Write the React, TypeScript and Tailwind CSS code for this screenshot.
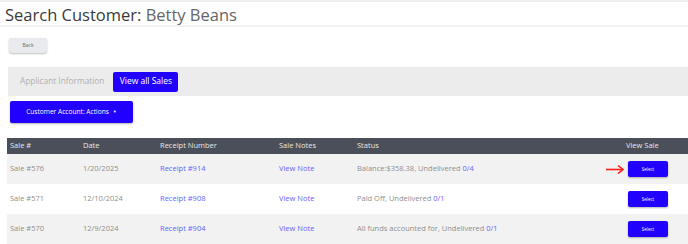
export default function App() {
  const rows = [
    { sale: "Sale #576", date: "1/20/2025", receipt: "Receipt #914", status: "Balance:$358.38, Undelivered ", count: "0/4", arrow: true, bg: "bg-[#f2f2f2]" },
    { sale: "Sale #571", date: "12/10/2024", receipt: "Receipt #908", status: "Paid Off, Undelivered ", count: "0/1", arrow: false, bg: "bg-white" },
    { sale: "Sale #570", date: "12/9/2024", receipt: "Receipt #904", status: "All funds accounted for, Undelivered ", count: "0/1", arrow: false, bg: "bg-[#f2f2f2]" },
  ];

  return (
    <div className="h-[244px] w-[688px] overflow-hidden bg-white font-['Open_Sans',sans-serif]">
      <div className="h-[2px] bg-[#eeeeee]" />
      <div className="border-b-2 border-[#f3f3f3] pl-[5px] pt-[3px] pb-[1px]">
        <h1 className="text-[16.5px] leading-[19px] text-[#3a3a3a]">
          Search Customer: <span className="text-[#666666]">Betty Beans</span>
        </h1>
      </div>

      <div className="flex pl-[9px] pt-[11px]">
        <button className="h-[15px] w-[38px] rounded-[3px] bg-[#e8eaee] text-[5px] text-[#666] shadow-[0_1px_2px_rgba(0,0,0,0.25)]">
          Back
        </button>
      </div>

      <div className="ml-[8px] mt-[14px] flex h-[29px] items-center bg-[#ececec] pl-[12px]">
        <span className="text-[8.3px] text-[#b0b0b0]">Applicant Information</span>
        <button className="ml-[9px] h-[20px] w-[65px] rounded-[2px] bg-[#2200ff] text-[8.5px] text-white">
          View all Sales
        </button>
      </div>

      <div className="flex pl-[10px] pt-[5px]">
        <button className="flex h-[22px] w-[123px] items-center justify-center gap-[4px] rounded-[2px] bg-[#2200ff] text-[6.6px] text-white shadow-[0_1px_2px_rgba(0,0,0,0.3)]">
          Customer Account: Actions
          <span className="text-[4px]">▼</span>
        </button>
      </div>

      <table className="ml-[7px] mt-[15px] w-[681px] border-collapse text-[7.5px]">
        <thead>
          <tr className="h-[16px] bg-[#4a4f59] text-left text-[#e8e8e8]">
            <th className="w-[76px] pl-[3px] font-normal">Sale #</th>
            <th className="w-[77px] pl-0 font-normal">Date</th>
            <th className="w-[119px] font-normal">Receipt Number</th>
            <th className="w-[78px] font-normal">Sale Notes</th>
            <th className="w-[269px] font-normal">Status</th>
            <th className="pl-0 font-normal">View Sale</th>
          </tr>
        </thead>
        <tbody>
          {rows.map((r) => (
            <tr key={r.sale} className={`h-[30px] ${r.bg} text-[#8f8f8f]`}>
              <td className="pl-[3px]">{r.sale}</td>
              <td>{r.date}</td>
              <td className="text-[#6a62ff]">{r.receipt}</td>
              <td className="text-[#6a62ff]">View Note</td>
              <td>
                {r.status}
                <span className="text-[#6a62ff]">{r.count}</span>
              </td>
              <td>
                <div className="relative ml-[2px] flex w-[40px]">
                  {r.arrow && (
                    <svg className="absolute left-[-23px] top-[3px]" width="20" height="10" viewBox="0 0 20 10">
                      <path d="M1 5.5 H17" stroke="#ff1a1a" strokeWidth="1.6" />
                      <path d="M13 1.5 L18 5.5 L13 9.5" fill="none" stroke="#ff1a1a" strokeWidth="1.6" />
                    </svg>
                  )}
                  <button className="h-[16px] w-[40px] rounded-[2px] bg-[#2200ff] text-[4.5px] text-white shadow-[0_1px_2px_rgba(0,0,0,0.3)]">
                    Select
                  </button>
                </div>
              </td>
            </tr>
          ))}
        </tbody>
      </table>
    </div>
  );
}
